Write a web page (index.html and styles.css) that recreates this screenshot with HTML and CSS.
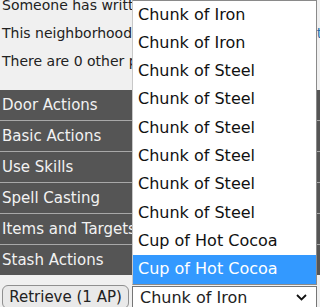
FILE: index.html
```html
<!DOCTYPE html>
<html lang="en">
<head>
    <meta charset="UTF-8">
    <meta name="viewport" content="width=device-width, initial-scale=1.0">
    <title>Stash</title>
    <link rel="stylesheet" href="styles.css">
</head>
<body>
    <div class="messages">
        <p>Someone has written something on the wall.</p>
        <p>This neighborhood is quiet right now. <a href="#">Find out more</a></p>
        <p>There are 0 other people here.</p>
    </div>

    <!-- Action panels -->
    <div class="actions">
        <div class="action-row">Door Actions</div>
        <div class="action-row">Basic Actions</div>
        <div class="action-row">Use Skills</div>
        <div class="action-row">Spell Casting</div>
        <div class="action-row">Items and Targets</div>
        <div class="action-row">Stash Actions</div>
    </div>

    <div class="stash-form">
        <button class="btn">Retrieve (1 AP)</button>
        <div class="picker">
            <div class="select">
                <span>Chunk of Iron</span>
                <svg class="chevron" width="11" height="7" viewBox="0 0 11 7"><path d="M1 1 L5.5 5.5 L10 1" fill="none" stroke="#111" stroke-width="1.8"/></svg>
            </div>
            <!-- open dropdown list -->
            <ul class="options">
                <li>Chunk of Iron</li>
                <li>Chunk of Iron</li>
                <li>Chunk of Steel</li>
                <li>Chunk of Steel</li>
                <li>Chunk of Steel</li>
                <li>Chunk of Steel</li>
                <li>Chunk of Steel</li>
                <li>Chunk of Steel</li>
                <li>Cup of Hot Cocoa</li>
                <li class="active">Cup of Hot Cocoa</li>
            </ul>
        </div>
    </div>
</body>
</html>
```

FILE: styles.css
```css
body {
    font-family: "DejaVu Sans", Verdana, sans-serif;
    font-size: 14px;
    margin: 0;
    padding: 0;
    background-color: #f0f0f0;
    color: #222;
    overflow: hidden;
}
.messages {
    margin-top: -9px;
    padding-left: 2px;
    white-space: nowrap;
}
.messages p {
    margin: 0;
    line-height: 28px;
}
.messages a {
    color: #2a6ea8;
    text-decoration: none;
}
.actions {
    margin-top: 15px;
    background-color: #555;
}
.action-row {
    height: 30px;
    line-height: 30px;
    padding-left: 2px;
    font-size: 15px;
    color: #f2f2f2;
    border-bottom: 1px solid #a8a8a8;
    white-space: nowrap;
}
.action-row:last-child {
    border-bottom: none;
}
.stash-form {
    display: flex;
    align-items: center;
    gap: 3px;
    padding: 10px 2px 0 2px;
}
.btn {
    font-family: inherit;
    font-size: 15px;
    height: 24px;
    width: 127px;
    padding: 0;
    color: #222;
    background-color: #e9e9e9;
    border: 1px solid #8f8f8f;
    border-radius: 6px;
}
.picker {
    position: relative;
}
.select {
    display: flex;
    align-items: center;
    justify-content: space-between;
    box-sizing: border-box;
    width: 185px;
    height: 23px;
    padding: 0 9px 0 7px;
    font-size: 16px;
    background: #fff;
    border: 1px solid #767676;
}
.options {
    position: absolute;
    left: 0;
    bottom: 24px;
    width: 185px;
    box-sizing: border-box;
    margin: 0;
    padding: 0;
    list-style: none;
    font-size: 16px;
    background: #fff;
    border: 1px solid #8a8a8a;
    border-left-color: #c8c8c8;
}
.options li {
    height: 28.3px;
    line-height: 28.3px;
    padding-left: 5px;
    color: #111;
    white-space: nowrap;
}
.options li.active {
    background-color: #3399ff;
    color: #fff;
}
```
